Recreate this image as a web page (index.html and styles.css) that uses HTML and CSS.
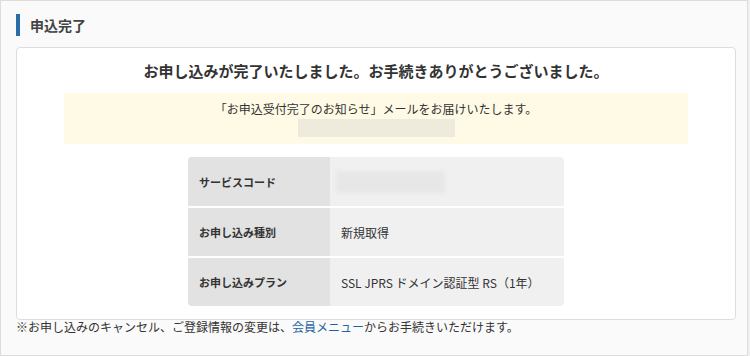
FILE: index.html
```html
<!DOCTYPE html>
<html lang="ja">
<head>
    <meta charset="UTF-8">
    <meta name="viewport" content="width=device-width, initial-scale=1.0">
    <title>申込完了</title>
    <link rel="stylesheet" href="styles.css">
</head>
<body>
    <div class="panel">
        <h2 class="panel-title">申込完了</h2>
        <div class="card">
            <p class="complete-msg">お申し込みが完了いたしました。お手続きありがとうございました。</p>
            <div class="notice">
                <p class="notice-text">「お申込受付完了のお知らせ」メールをお届けいたします。</p>
                <div class="notice-mail"></div>
            </div>
            <div class="detail">
                <div class="detail-row">
                    <div class="detail-head">サービスコード</div>
                    <div class="detail-value"><span class="masked"></span></div>
                </div>
                <div class="detail-row">
                    <div class="detail-head">お申し込み種別</div>
                    <div class="detail-value">新規取得</div>
                </div>
                <div class="detail-row">
                    <div class="detail-head">お申し込みプラン</div>
                    <div class="detail-value">SSL JPRS ドメイン認証型 RS（1年）</div>
                </div>
            </div>
        </div>
        <p class="footnote">※お申し込みのキャンセル、ご登録情報の変更は、<a href="#">会員メニュー</a>からお手続きいただけます。</p>
    </div>
</body>
</html>
```

FILE: styles.css
```css
body {
    margin: 0;
    background-color: #f0f0f0;
    color: #333;
    font-family: "Noto Sans CJK JP", "Noto Sans", sans-serif;
}

.panel {
    width: 720px;
    height: 354px;
    padding: 0 11px 0 15px;
    background-color: #fafafa;
    border: 1px solid #ddd;
}

.panel-title {
    margin: 13px 0 0;
    padding-left: 10px;
    border-left: 4px solid #2a6ea8;
    height: 22px;
    line-height: 22px;
    font-size: 14px;
    font-weight: bold;
    color: #444;
}

.card {
    margin-top: 11px;
    padding: 11px 47px 13px;
    background-color: #fff;
    border: 1px solid #ddd;
    border-radius: 4px;
}

.complete-msg {
    margin: 0;
    line-height: 24px;
    font-size: 15px;
    font-weight: bold;
    text-align: center;
    color: #333;
}

.notice {
    margin-top: 10px;
    padding: 7px 0;
    background-color: #fffae6;
    text-align: center;
}

.notice-text {
    margin: 0;
    line-height: 18px;
    font-size: 12px;
}

.notice-mail {
    width: 157px;
    height: 18px;
    margin: 1px auto 0;
    background-color: #eeebdd;
}

.detail {
    width: 376px;
    margin: 13px auto 0;
    display: flex;
    flex-direction: column;
    gap: 2px;
    border-radius: 4px;
    overflow: hidden;
    background-color: #fff;
}

.detail-row {
    display: grid;
    grid-template-columns: 142px 1fr;
    height: 48px;
}

.detail-row:first-child {
    height: 49px;
}

.detail-head {
    display: flex;
    align-items: center;
    padding-left: 11px;
    background-color: #e2e2e2;
    font-size: 11px;
    font-weight: bold;
}

.detail-value {
    display: flex;
    align-items: center;
    padding-left: 11px;
    background-color: #f0f0f0;
    font-size: 12px;
}

.masked {
    display: block;
    width: 109px;
    height: 22px;
    margin-left: -5px;
    background-color: #e7e7e7;
    filter: blur(2px);
}

.footnote {
    margin: 0;
    line-height: 14px;
    font-size: 12px;
    color: #333;
}

.footnote a {
    color: #1f63a6;
    text-decoration: none;
}
```
